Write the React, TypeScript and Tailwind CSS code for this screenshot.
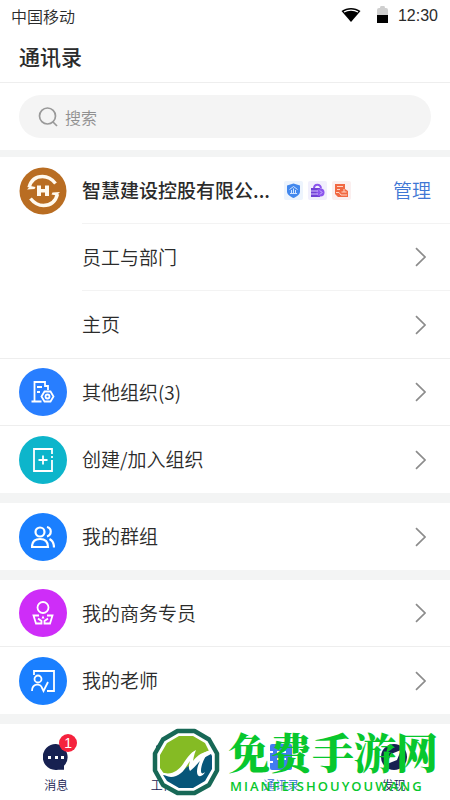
import type { ReactNode } from 'react';

function Chevron() {
  return (
    <svg className="h-5 w-3 shrink-0" viewBox="0 0 12 20" fill="none" stroke="#8c8c8c" strokeWidth="1.7">
      <path d="M2 1.2 11 10l-9 8.800" />
    </svg>
  );
}

function Disc({ color, children }: { color: string; children: ReactNode }) {
  return (
    <span className={`flex size-12 shrink-0 items-center justify-center rounded-full ${color}`}>
      <svg className="size-6" viewBox="0 0 24 24" fill="none" stroke="#fff" strokeWidth="1.8">
        {children}
      </svg>
    </span>
  );
}

function Row({ label, icon, line }: { label: string; icon: ReactNode; line?: boolean }) {
  return (
    <li>
      <button className={`flex h-[67px] w-full items-center border-[#eeeeee] pr-6 pl-[19px] text-left ${line ? 'border-b' : ''}`}>
        {icon}
        <span className="ml-[15px] flex-1">{label}</span>
        <Chevron />
      </button>
    </li>
  );
}

function SubRow({ label }: { label: string }) {
  return (
    <li className="group pl-[82px] last:border-b last:border-[#eeeeee]">
      <button className="flex h-[67px] w-full items-center border-b border-[#f3f3f3] pr-6 text-left group-last:border-0">
        <span className="flex-1">{label}</span>
        <Chevron />
      </button>
    </li>
  );
}

function CompanyLogo() {
  return (
    <svg className="size-12 shrink-0" viewBox="0 0 48 48">
      <circle cx="24" cy="24" r="23.500" fill="#b96d22" />
      <g fill="none" stroke="#fff9ee" strokeWidth="3.400">
        <path d="M10 20.500C12 13 17 9.500 23.500 9.500c5.500 0 9.500 2.500 13 7" />
        <path d="M38.500 27C36.500 35 31 38.500 24.500 38.500c-5.500 0-9.500-2.500-13-7" />
      </g>
      <g fill="#fff9ee">
        <path d="m8 22.500 3.500-3.500 5 1-1 2zM41 25l-3.500 3.500-5-1 1-2z" />
        <path d="M18 18.500h4v3.500h4v-3.500h4V29h-4v-3.500h-4V29h-4z" />
      </g>
    </svg>
  );
}

function Badges() {
  return (
    <span className="flex shrink-0 gap-[5px]">
      <svg className="size-[19px]" viewBox="0 0 19 19">
        <rect width="19" height="19" rx="2" fill="#edf4fd" />
        <path d="M9.500 2.500 16 4.500v6c0 3-3 5-6.500 6.500C6 15.500 3 13.500 3 10.500v-6z" fill="#4388ed" />
        <path d="m5.500 8.500 4-3 4 3M6 12.500h7M7.500 12V9m2 3V7.500m2 4.500V9" stroke="#cfe3ff" fill="none" />
      </svg>
      <svg className="size-[19px]" viewBox="0 0 19 19">
        <rect width="19" height="19" rx="2" fill="#f1effc" />
        <path d="M6 7.500c0-5 6.500-5 7 0" stroke="#8b55ed" strokeWidth="2" fill="none" />
        <path d="M3 7h9v9H3z" fill="#7040d5" />
        <circle cx="12.500" cy="11.500" r="4" fill="#8b55ed" />
        <path d="M3 10h7M3 13h7M12 9.500l2 2-2 2" stroke="#d5c2ff" fill="none" />
      </svg>
      <svg className="size-[19px]" viewBox="0 0 19 19">
        <rect width="19" height="19" rx="2" fill="#fbefef" />
        <path d="M3 3h10v5l3 2v6H6L3 13z" fill="#f16842" />
        <path d="M5 5.500h6M5 8.500h3M4 11.500h3l2 2.500h6M9.500 11h5M12 8v3" stroke="#ffd5c5" fill="none" />
      </svg>
    </span>
  );
}

function Tab({ label, color, children }: { label: string; color: string; children: ReactNode }) {
  return (
    <button className={`flex flex-col items-center gap-[7px] pt-5 text-xs leading-4 ${color}`}>
      <span className="relative size-[26px]">{children}</span>
      {label}
    </button>
  );
}

function Watermark() {
  return (
    <div className="pointer-events-none absolute top-1 right-0 flex gap-2 pr-3">
      <svg className="size-[68px] shrink-0" viewBox="0 0 68 68">
        <path
          d="M25.500 3h17l14.500 8.500L65 25.500v17L57 57l-14.500 8h-17L11 57 3 42.500v-17L11 11.500z"
          fill="#fff"
          stroke="#176856"
          strokeWidth="4.500"
          strokeLinejoin="round"
        />
        <path d="M27 8h14l12 7 4 8c-9 2-12 5-17 11-7 9-11 13-19 13-6 0-9-1-11-4L8 40V27l7-12z" fill="#85bb24" />
        <path d="M11 47c10 2 17-1 24-8l24-13 1 2v13l-7 12-12 7H27l-12-7z" fill="#075679" />
        <path
          d="M9 44c10 4 17-1 22-8 4-6 7-11 13-14-2 5-3 9-3 13 4-5 9-10 17-13-6 8-9 15-9 21 0 3 2 3 4 1-2 5-8 6-8 0 0-4 1-7 3-11-4 4-7 8-10 10-2-3-1-6 0-10-4 5-6 12-14 15-6 2-11 1-15-6z"
          fill="#fff"
        />
      </svg>
      <div className="text-[#08c72d]">
        <p className="font-['Noto_Serif_CJK_SC','Noto_Sans_CJK_SC',serif] text-[42px] leading-[46px] font-black whitespace-nowrap">免费手游网</p>
        <p className="mt-1 pl-0.5 font-['Open_Sans',sans-serif] text-[13px] leading-4 font-semibold tracking-[2px]">MIANFEISHOUYOUWANG</p>
      </div>
    </div>
  );
}

export default function App() {
  return (
    <div className="flex min-h-screen flex-col bg-white font-['Noto_Sans_CJK_SC',sans-serif] text-[19px] font-[350] text-[#2b2b2b]">
      <header>
        <div className="flex h-8 items-center pr-3 pl-[11px] text-base">
          <span className="flex-1">中国移动</span>
          <svg className="mr-4 h-4 w-5" viewBox="0 0 20 16">
            <path d="M10 14 .5 3C6-1 14-1 19.500 3z" fill="#000" />
            <path d="M3 4C7 1.500 13 1.500 17 4" stroke="#fff" strokeWidth="1.400" fill="none" />
          </svg>
          <svg className="mr-2.5 h-5 w-[11px]" viewBox="0 0 11 20">
            <path d="M0 4q0-2 2-2h1q0-2 1-2h3q1 0 1 2h1q2 0 2 2v5H0z" fill="#cfcfcf" />
            <path d="M0 9h11v8H0z" fill="#000" />
          </svg>
          <span className="font-['Liberation_Sans',sans-serif]">12:30</span>
        </div>
        <h1 className="flex h-[51px] items-center border-b border-[#eeeeee] px-[19px] text-[21px] font-medium">通讯录</h1>
        <div className="px-[19px] py-3">
          <label className="flex h-[43px] items-center gap-[7px] rounded-full bg-[#f4f4f4] pl-[19px]">
            <svg className="size-5 shrink-0" viewBox="0 0 20 20" fill="none" stroke="#999" strokeWidth="1.700">
              <circle cx="9.500" cy="9" r="8" />
              <path d="m15 15 4 4" />
            </svg>
            <input aria-label="搜索" placeholder="搜索" className="min-w-0 flex-1 bg-transparent text-base outline-none placeholder:text-[#909090]" />
          </label>
        </div>
      </header>
      <main className="flex flex-1 flex-col gap-2.5 bg-[#f3f4f4] pt-[7px] pb-2.5">
        <section className="bg-white">
          <div className="flex h-[67px] items-center pl-[19px]">
            <CompanyLogo />
            <div className="ml-[15px] flex h-full min-w-0 flex-1 items-center border-b border-[#f3f3f3] pr-[19px]">
              <h2 className="mr-3.5 font-medium whitespace-nowrap">智慧建设控股有限公...</h2>
              <Badges />
              <button className="ml-auto shrink-0 text-[#3f77d4]">管理</button>
            </div>
          </div>
          <ul>
            <SubRow label="员工与部门" />
            <SubRow label="主页" />
          </ul>
          <ul>
            <Row
              label="其他组织(3)"
              line
              icon={
                <Disc color="bg-[#287eff]">
                  <path d="M.5 21.500h10M3.500 21V2H14v5M6 7h5M6 12h3M14 6h3v4" />
                  <path d="m13.500 11.500h6l3 5-3 5h-6l-3-5z" />
                  <circle cx="16.500" cy="16.500" r="2" />
                </Disc>
              }
            />
            <Row
              label="创建/加入组织"
              icon={
                <Disc color="bg-[#0db5cb]">
                  <path d="M21 6V1H3v22h18V12M21 8v2M12 7.500v9M7.500 12h9" />
                </Disc>
              }
            />
          </ul>
        </section>
        <section className="bg-white">
          <ul>
            <Row
              label="我的群组"
              icon={
                <Disc color="bg-[#1a7fff]">
                  <g strokeWidth="2.200">
                    <circle cx="9" cy="7" r="4.500" />
                    <path d="M1 22c0-5 3-8 8-8s8 3 8 8zM16 2c5 1 5 8 0 9.500M18.500 14c3 1.500 4.500 4 4.500 8.500" />
                  </g>
                </Disc>
              }
            />
          </ul>
        </section>
        <section className="bg-white">
          <ul>
            <Row
              label="我的商务专员"
              line
              icon={
                <Disc color="bg-[#ce2df8]">
                  <circle cx="12" cy="6.500" r="5.500" />
                  <path d="M8 14.500H2.500L5 22.500h5.500v-2.500L7 17.500M16 14.500h5.500L19 22.500h-5.500v-2.500l3.500-2.500" />
                  <path d="m12 14.500 1.500 3h-3z" fill="#fff" stroke="none" />
                </Disc>
              }
            />
            <Row
              label="我的老师"
              icon={
                <Disc color="bg-[#1a7fff]">
                  <path d="M3 6V2h20v20h-7" />
                  <circle cx="7" cy="10" r="3.500" />
                  <path d="M1 22c0-8 9-8 10-3l1.500 3L17 13" />
                </Disc>
              }
            />
          </ul>
        </section>
      </main>
      <nav className="relative grid h-[77px] shrink-0 grid-cols-4 items-start bg-white">
        <Tab label="消息" color="text-[#172151]">
          <svg className="size-[26px]" viewBox="0 0 26 26">
            <path d="M13 0a13 13 0 1 0 2 25.800h6v-4A13 13 0 0 0 13 0" fill="#172151" />
            <path d="M5 12h3v3H5zm7 0h3v3h-3zm6 0h3v3h-3z" fill="#fff" />
          </svg>
          <span className="absolute -top-2.5 -right-2 flex size-[18px] items-center justify-center rounded-full bg-[#f5223d] font-['Liberation_Sans',sans-serif] text-sm text-white">1</span>
        </Tab>
        <Tab label="工作台" color="text-[#172151]">
          <svg className="size-[26px]" viewBox="0 0 26 26" fill="#172151">
            <path d="M0 3q0-2 2-2h9v10H0zM15 1h10v10H15zM0 15h11v10H2q-2 0-2-2zM15 15h10v10H15z" />
          </svg>
        </Tab>
        <Tab label="通讯录" color="text-[#3670d0]">
          <svg className="size-[26px]" viewBox="0 0 26 26">
            <rect x="2" width="22" height="26" rx="2" fill="#437bf1" />
            <path d="M0 8h5M0 18h5M9 8h9M9 15h9" stroke="#fff" strokeWidth="2" />
          </svg>
        </Tab>
        <Tab label="发现" color="text-[#172151]">
          <svg className="size-[26px]" viewBox="0 0 26 26">
            <circle cx="13" cy="13" r="13" fill="#172151" />
            <path d="m6 20 4-10 10-4-4 10z" fill="#fff" />
          </svg>
        </Tab>
        <Watermark />
      </nav>
    </div>
  );
}
